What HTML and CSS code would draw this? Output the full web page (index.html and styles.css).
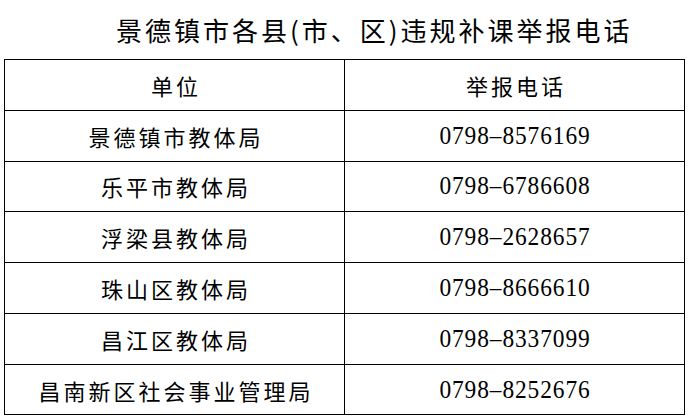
FILE: index.html
```html
<!DOCTYPE html>
<html lang="zh-CN">
<head>
<meta charset="utf-8">
<title>景德镇市各县(市、区)违规补课举报电话</title>
<link rel="stylesheet" href="styles.css">
</head>
<body>
<div class="page">
  <h1 class="title">景德镇市各县(市、区)违规补课举报电话</h1>
  <table class="report">
    <colgroup><col class="c1"><col class="c2"></colgroup>
    <thead>
      <tr><th class="unit">单位</th><th class="unit">举报电话</th></tr>
    </thead>
    <tbody>
      <tr><td class="unit">景德镇市教体局</td><td class="phone"><span class="num">0798–8576169</span></td></tr>
      <tr><td class="unit">乐平市教体局</td><td class="phone"><span class="num">0798–6786608</span></td></tr>
      <tr><td class="unit">浮梁县教体局</td><td class="phone"><span class="num">0798–2628657</span></td></tr>
      <tr><td class="unit">珠山区教体局</td><td class="phone"><span class="num">0798–8666610</span></td></tr>
      <tr><td class="unit">昌江区教体局</td><td class="phone"><span class="num">0798–8337099</span></td></tr>
      <tr class="last"><td class="unit">昌南新区社会事业管理局</td><td class="phone"><span class="num">0798–8252676</span></td></tr>
    </tbody>
  </table>
</div>
</body>
</html>
```
FILE: styles.css
```css
html, body {
  margin: 0;
  padding: 0;
  background: #fff;
  color: #000;
}
.page {
  width: 689px;
  height: 419px;
  overflow: hidden;
}
.title {
  margin: 0;
  height: 59px;
  display: flex;
  align-items: center;
  padding-left: 116px;
  font-family: "Noto Sans CJK SC", sans-serif;
  font-weight: 400;
  font-size: 26px;
  letter-spacing: 3px;
  box-sizing: border-box;
}
.report {
  margin-left: 4px;
  width: 681px;
  border-collapse: collapse;
  table-layout: fixed;
}
.c1, .c2 { width: 340px; }
.report th, .report td {
  border: 1px solid #000;
  padding: 0;
  text-align: center;
  vertical-align: middle;
  font-weight: 400;
}
.report tr { height: 50.8px; }
.report tr.last { height: 50.5px; }
.unit {
  font-family: "Noto Sans CJK SC", sans-serif;
  font-size: 22px;
  letter-spacing: 3px;
  text-indent: 3px;
}
.phone {
  font-family: "Liberation Serif", serif;
  font-size: 26px;
}
.num {
  display: inline-block;
  letter-spacing: 1px;
  transform: scaleX(0.9);
}
```
